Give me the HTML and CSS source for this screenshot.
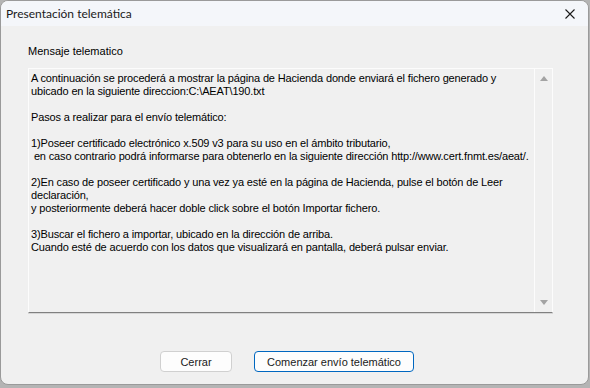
FILE: index.html
```html
<!DOCTYPE html>
<html lang="es">
<head>
    <meta charset="UTF-8">
    <title>Presentación telemática</title>
    <link rel="stylesheet" href="styles.css">
</head>
<body>
    <div class="window">
        <div class="titlebar">
            <span class="title">Presentación telemática</span>
            <svg class="close" width="10" height="10" viewBox="0 0 10 10">
                <path d="M0.5 0.5 L9.5 9.5 M9.5 0.5 L0.5 9.5" stroke="#1a1a1a" stroke-width="1.1" fill="none"/>
            </svg>
        </div>
        <div class="content">
            <div class="group-label">Mensaje telematico</div>
            <div class="message-box">
                <div class="message-text">A continuación se procederá a mostrar la página de Hacienda donde enviará el fichero generado y
ubicado en la siguiente direccion:C:\AEAT\190.txt

Pasos a realizar para el envío telemático:

1)Poseer certificado electrónico x.509 v3 para su uso en el ámbito tributario,
 en caso contrario podrá informarse para obtenerlo en la siguiente dirección http://www.cert.fnmt.es/aeat/.

2)En caso de poseer certificado y una vez ya esté en la página de Hacienda, pulse el botón de Leer
declaración,
y posteriormente deberá hacer doble click sobre el botón Importar fichero.

3)Buscar el fichero a importar, ubicado en la dirección de arriba.
Cuando esté de acuerdo con los datos que visualizará en pantalla, deberá pulsar enviar.</div>
                <div class="scrollbar">
                    <span class="arrow up"></span>
                    <span class="arrow down"></span>
                </div>
            </div>
            <div class="buttons">
                <button class="btn">Cerrar</button>
                <button class="btn default">Comenzar envío telemático</button>
            </div>
        </div>
    </div>
</body>
</html>
```

FILE: styles.css
```css
body {
    margin: 0;
    background-color: #b4b4b4;
    width: 590px;
    height: 388px;
    overflow: hidden;
}

.window {
    width: 587px;
    height: 383px;
    border: 1px solid #9a9a9a;
    border-radius: 8px;
    background-color: #f0f0f0;
    overflow: hidden;
    display: flex;
    flex-direction: column;
}

.titlebar {
    height: 25px;
    flex: none;
    background-color: #f4f6fa;
    display: flex;
    align-items: center;
    justify-content: space-between;
    padding: 0 13px 0 5px;
}

.title {
    font-family: Lato, "Open Sans", sans-serif;
    font-size: 12px;
    color: #1a1a1a;
}

.close {
    display: block;
    margin-top: 1px;
}

.content {
    flex: 1;
    display: flex;
    flex-direction: column;
    padding: 19px 0 0 27px;
    font-family: "Liberation Sans", Arial, sans-serif;
    font-size: 11px;
    color: #000;
}

.group-label {
    line-height: 13px;
    margin-bottom: 10px;
}

.message-box {
    width: 523px;
    height: 243px;
    border: 1px solid #fcfcfc;
    border-bottom: 1px solid #808080;
    box-shadow: 0 1px 0 #d6d6d6;
    display: flex;
}

.message-text {
    flex: 1;
    white-space: pre;
    line-height: 13px;
    padding: 3px 0 0 2px;
    overflow: hidden;
    letter-spacing: -0.15px;
}

.scrollbar {
    width: 17px;
    border-left: 1px solid #fcfcfc;
    display: flex;
    flex-direction: column;
    justify-content: space-between;
    align-items: center;
    padding: 7px 0 7px 0;
}

.arrow {
    width: 0;
    height: 0;
    border-left: 4px solid transparent;
    border-right: 4px solid transparent;
}

.arrow.up {
    border-bottom: 5px solid #a3a3a3;
}

.arrow.down {
    border-top: 5px solid #a3a3a3;
}

.buttons {
    display: flex;
    gap: 22px;
    margin-top: 38px;
    padding-left: 132px;
}

.btn {
    height: 21px;
    padding: 0;
    background-color: #fdfdfd;
    border: 1px solid #d0d0d0;
    border-radius: 4px;
    font-family: "Liberation Sans", Arial, sans-serif;
    font-size: 11px;
    color: #1a1a1a;
    width: 72px;
}

.btn.default {
    width: 160px;
    border-color: #0067c0;
}
```
